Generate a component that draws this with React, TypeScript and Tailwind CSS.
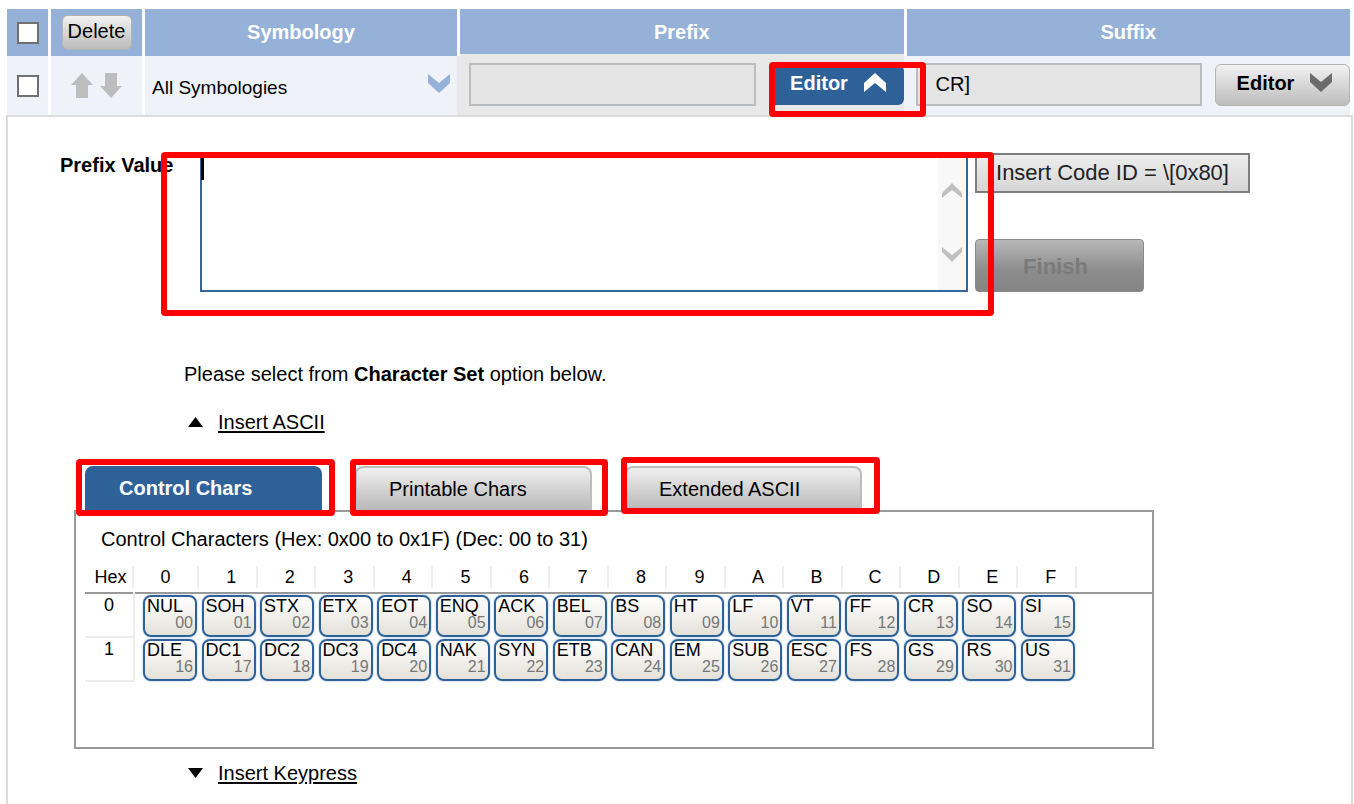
import React from "react";

const HEX = "0123456789ABCDEF".split("");

const ROWS = [
  ["NUL", "SOH", "STX", "ETX", "EOT", "ENQ", "ACK", "BEL", "BS", "HT", "LF", "VT", "FF", "CR", "SO", "SI"],
  ["DLE", "DC1", "DC2", "DC3", "DC4", "NAK", "SYN", "ETB", "CAN", "EM", "SUB", "ESC", "FS", "GS", "RS", "US"],
];

const TABS = [
  { label: "Control Chars", active: true, mark: "-top-[7px] -bottom-[6px] -left-[9px] -right-[13px]" },
  { label: "Printable Chars", active: false, mark: "-top-[7px] -bottom-[6px] -left-[5px] -right-[16px]" },
  { label: "Extended ASCII", active: false, mark: "-top-[9px] -bottom-[4px] -left-[4px] -right-[18px]" },
];

const checkbox = "block mx-auto size-[22px] appearance-none border-2 border-[#707070] bg-white";
const valueBox = "h-[43px] min-w-0 flex-1 border-2 border-[#b9bdc0] bg-[#e4e4e4] px-[18px]";
const greyButton = "border border-[#b4b4b4] bg-linear-to-b from-[#f2f2f2] to-[#bcbcbc]";

function Highlight({ className }: { className: string }) {
  return <span className={"pointer-events-none absolute z-10 rounded-sm border-[6px] border-[#ff0000] " + className} />;
}

function Chevron({ up, className }: { up?: boolean; className: string }) {
  return (
    <svg viewBox="0 0 22 19" className={className} fill="currentColor" aria-hidden="true">
      {up ? <path d="M0 19V10L11 0l11 10v9L11 10z" /> : <path d="M0 0v9l11 10L22 9V0L11 9z" />}
    </svg>
  );
}

function ThinChevron({ up }: { up?: boolean }) {
  return (
    <svg viewBox="0 0 20 15" className="h-[15px] w-5 text-[#c0c0c0]" fill="currentColor" aria-hidden="true">
      {up ? <path d="M0 15v-5L10 0l10 10v5L10 7z" /> : <path d="M0 0v5l10 10L20 5V0L10 8z" />}
    </svg>
  );
}

function SymbologyTable() {
  return (
    <table className="w-full table-fixed border-collapse">
      <colgroup>
        <col className="w-[41px]" />
        <col className="w-[94px]" />
        <col className="w-[315px]" />
        <col />
        <col />
      </colgroup>
      <thead>
        <tr className="h-[47px] text-white">
          <th className="bg-[#95b1d7] p-0">
            <input type="checkbox" aria-label="Select all" className={checkbox} />
          </th>
          <th className="p-0">
            <div className="ml-[3px] flex h-[47px] items-center justify-center bg-[#95b1d7]">
              <button className={greyButton + " h-[35px] w-[70px] rounded-md pb-1 font-normal leading-6 text-black"}>Delete</button>
            </div>
          </th>
          <th className="p-0">
            <div className="ml-[3px] h-[47px] bg-[#95b1d7] leading-[47px]">Symbology</div>
          </th>
          <th className="p-0">
            <div className="ml-[3px] h-[47px] border-b-2 border-[#e8e8e8] bg-[#95b1d7] leading-[47px]">Prefix</div>
          </th>
          <th className="p-0">
            <div className="ml-[3px] h-[47px] bg-[#95b1d7] leading-[47px]">Suffix</div>
          </th>
        </tr>
      </thead>
      <tbody>
        <tr className="h-[59px]">
          <td className="bg-[#eff2f8] p-0">
            <input type="checkbox" aria-label="Select All Symbologies" className={checkbox} />
          </td>
          <td className="p-0">
            <div className="ml-[3px] flex h-[59px] items-center justify-center gap-[7px] bg-[#eff2f8] text-[#bdbdbd]">
              <button aria-label="Move up">
                <svg viewBox="0 0 22 25" className="h-[25px] w-[22px]" fill="currentColor">
                  <path d="M11 0l11 12h-5v13H5V12H0z" />
                </svg>
              </button>
              <button aria-label="Move down">
                <svg viewBox="0 0 22 25" className="h-[25px] w-[22px]" fill="currentColor">
                  <path d="M11 25L0 13h5V0h12v13h5z" />
                </svg>
              </button>
            </div>
          </td>
          <td className="p-0">
            <div className="relative ml-[3px] h-[59px] bg-[#eff2f8]">
              <select aria-label="Symbology" className="size-full appearance-none bg-transparent px-[7px] pt-1 text-[19px]">
                <option>All Symbologies</option>
              </select>
              <Chevron className="pointer-events-none absolute top-[18px] right-[7px] h-[19px] w-[22px] text-[#95b1d7]" />
            </div>
          </td>
          <td className="bg-[#e8e8e8] p-0">
            <div className="flex items-center gap-[13px] pb-0.5 pl-3">
              <input aria-label="Prefix" className={valueBox} />
              <div className="relative">
                <button className="flex h-[40px] w-[135px] items-center justify-center gap-4 rounded-md bg-[#2f6199] pb-1 pl-1 font-bold text-white">
                  Editor
                  <Chevron up className="h-[19px] w-[22px]" />
                </button>
                <Highlight className="-top-[3px] -bottom-[12px] left-0 -right-[22px]" />
              </div>
            </div>
          </td>
          <td className="bg-[#eff2f8] p-0">
            <div className="flex items-center gap-[13px] pb-0.5 pl-3">
              <input aria-label="Suffix" defaultValue="CR]" className={valueBox} />
              <button className={greyButton + " flex h-[42px] w-[135px] items-center justify-center gap-4 rounded-md pb-1 pl-1 font-bold"}>
                Editor
                <Chevron className="h-[19px] w-[22px] text-[#6b6b6b]" />
              </button>
            </div>
          </td>
        </tr>
      </tbody>
    </table>
  );
}

function PrefixForm() {
  return (
    <div className="flex items-start pr-[101px] pl-[52px]">
      <label htmlFor="prefix-value" className="w-[140px] shrink-0 font-bold">
        Prefix Value
      </label>
      <div className="relative mr-[7px] h-[139px] flex-1">
        <textarea id="prefix-value" className="block size-full resize-none border-2 border-[#35659d] bg-white pr-8 pl-1" />
        {/* caret */}
        <span className="absolute top-0.5 left-px h-[25px] w-[3px] bg-black" />
        <div className="absolute inset-y-0.5 right-0.5 flex w-7 flex-col items-center justify-center gap-[49px] bg-[#f8f8f8]">
          <button aria-label="Scroll up">
            <ThinChevron up />
          </button>
          <button aria-label="Scroll down">
            <ThinChevron />
          </button>
        </div>
        <Highlight className="-top-px -bottom-6 -left-[39px] -right-[26px]" />
      </div>
      <div className="flex w-[275px] shrink-0 flex-col items-start gap-[46px] text-[22px]">
        <button className="h-10 w-full border-2 border-[#7d7d7d] bg-linear-to-b from-[#ededed] to-[#d6d6d6] text-[#222]">
          Insert Code ID = \[0x80]
        </button>
        <button
          disabled
          className="h-[53px] w-[169px] rounded border border-[#8a8a8a] bg-linear-to-b from-[#b8b8b8] via-[#8c8c8c] via-60% to-[#858585] pt-0.5 pr-2 font-bold text-[#7a7a7a]"
        >
          Finish
        </button>
      </div>
    </div>
  );
}

function CharTable() {
  return (
    <table className="w-full table-fixed border-collapse text-lg">
      <colgroup>
        <col className="w-[49px]" />
        <col className="w-[65px]" />
        {HEX.slice(1).map((h) => (
          <col key={h} />
        ))}
        <col className="w-[75px]" />
      </colgroup>
      <thead>
        <tr className="h-7 border-b-2 border-[#999] leading-[22px]">
          <th className="p-0 pb-1 font-normal">
            <div className="border-r-2 border-[#ededed] pl-1">Hex</div>
          </th>
          {HEX.map((h) => (
            <th key={h} className="group p-0 pb-1 font-normal">
              <div className="border-r-2 border-[#ededed] pl-2 group-nth-2:pl-0">{h}</div>
            </th>
          ))}
          <td />
        </tr>
      </thead>
      <tbody>
        {ROWS.map((row, r) => (
          <tr key={r} className="h-[44px]">
            <th scope="row" className="border-r-2 border-b-2 border-[#ededed] p-0 align-top font-normal leading-[22px]">
              {r}
            </th>
            {row.map((name, c) => (
              <td key={name} className="p-0 pr-0.5 align-bottom">
                <button className="ml-auto flex h-[42px] w-[54px] flex-col rounded-lg border-2 border-[#2f6199] bg-linear-to-b from-white to-[#e3e1d9] px-0.5 shadow-[0_0_2px_#8fb4dc]">
                  <span className="self-start leading-[18px]">{name}</span>
                  <span className="self-end text-base leading-4 text-[#777]">{String(r * 16 + c).padStart(2, "0")}</span>
                </button>
              </td>
            ))}
            <td />
          </tr>
        ))}
      </tbody>
    </table>
  );
}

function SectionLink({ up, children }: { up?: boolean; children: React.ReactNode }) {
  return (
    <div className="flex items-center gap-[15px] pl-[180px]">
      <svg viewBox="0 0 15 10" className="h-[10px] w-[15px]" aria-hidden="true">
        <path d={up ? "M0 10L7.500 0L15 10z" : "M0 0L7.500 10L15 0z"} />
      </svg>
      <a href="#" className="underline decoration-2 underline-offset-2">
        {children}
      </a>
    </div>
  );
}

export default function App() {
  return (
    <div className="flex min-h-screen flex-col overflow-hidden bg-white pt-[9px] font-['Liberation_Sans',Arial,sans-serif] text-xl leading-6 text-black">
      <div className="pr-1 pl-[7px]">
        <SymbologyTable />
      </div>

      <div className="mr-px ml-[6px] flex-1 border-x-2 border-t-2 border-[#dcdcdc] pt-[36px]">
        <PrefixForm />

        <p className="mt-[70px] pl-[176px]">
          Please select from <b>Character Set</b> option below.
        </p>

        <div className="mt-6">
          <SectionLink up>Insert ASCII</SectionLink>
        </div>

        <div className="mt-8 ml-[66px] w-[1080px] max-w-full">
          <div className="flex gap-[33px] pl-[11px]">
            {TABS.map((tab) => (
              <div key={tab.label} className="relative">
                <button
                  className={
                    "h-[44px] w-[237px] rounded-t-lg text-left " +
                    (tab.active
                      ? "bg-[#2f6199] pl-[34px] font-bold text-white"
                      : "border-2 border-b-0 border-[#bdbdbd] bg-linear-to-b from-[#f0f0f0] to-[#b8b8b8] pl-8")
                  }
                >
                  {tab.label}
                </button>
                <Highlight className={tab.mark} />
              </div>
            ))}
          </div>

          <div className="h-[239px] border-2 border-[#999] pt-[15px] pl-[9px]">
            <p className="mb-[14px] pl-4">Control Characters (Hex: 0x00 to 0x1F) (Dec: 00 to 31)</p>
            <CharTable />
          </div>
        </div>

        <div className="mt-3">
          <SectionLink>Insert Keypress</SectionLink>
        </div>
      </div>
    </div>
  );
}
